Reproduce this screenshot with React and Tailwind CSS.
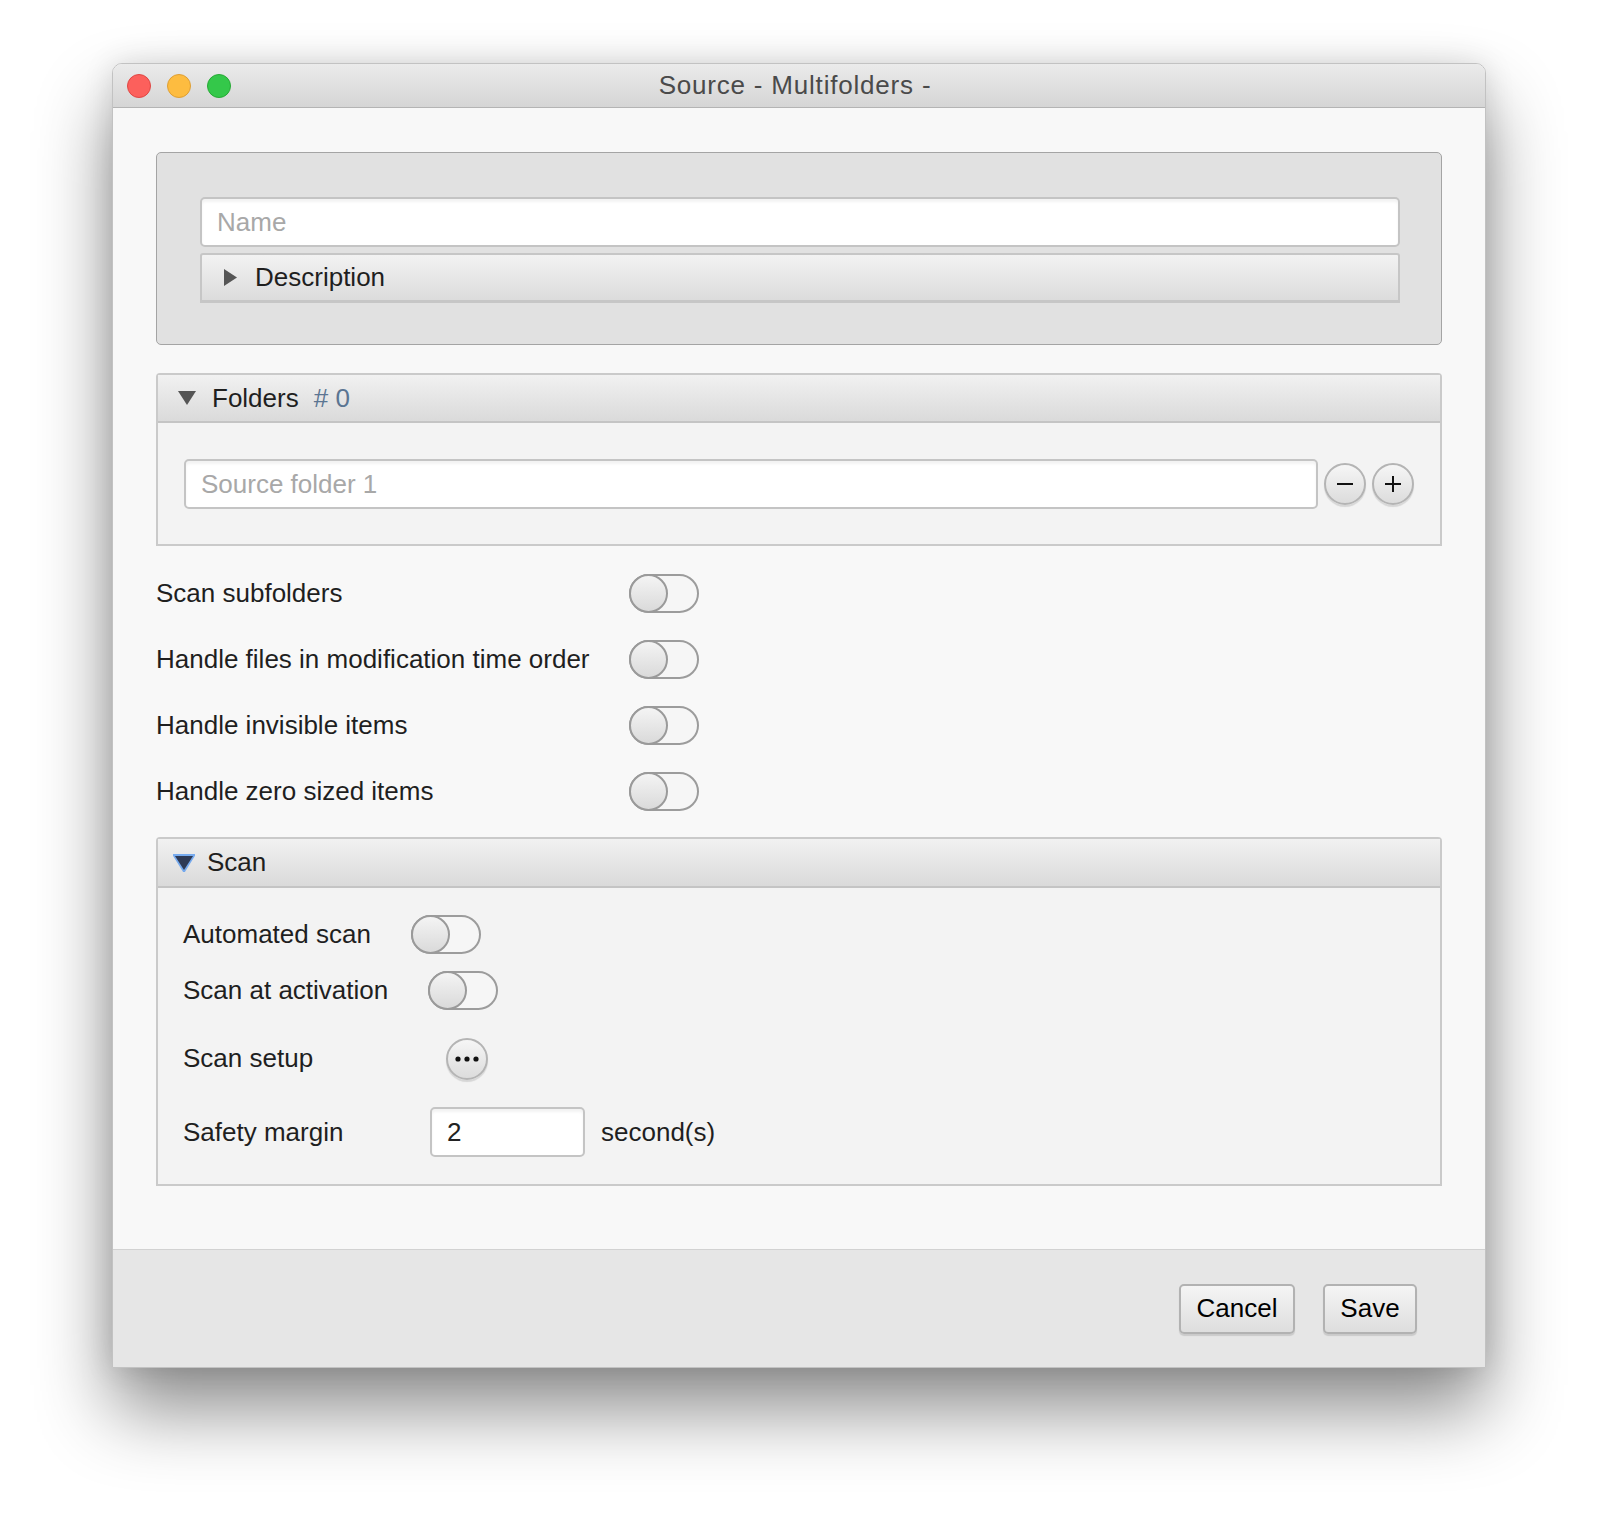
import React from 'react';

const Toggle = () => (
  <div className="relative w-[70px] h-[39px] rounded-full border-2 border-[#9c9c9c] bg-[#f6f6f6] shrink-0">
    <div className="absolute left-[-2px] top-[-2px] w-[39px] h-[39px] rounded-full border-2 border-[#9a9a9a] bg-gradient-to-b from-[#f4f4f4] to-[#dadada]"></div>
  </div>
);

const RoundButton = ({ children }) => (
  <button className="w-[42px] h-[42px] rounded-full border-2 border-[#b4b4b4] bg-gradient-to-b from-[#f6f6f6] to-[#dcdcdc] shadow-[0_2px_1px_rgba(0,0,0,0.12)] flex items-center justify-center text-black shrink-0">
    {children}
  </button>
);

const TextInput = ({ placeholder, value, className = '' }) => (
  <div className={`h-[50px] rounded-[5px] border-2 border-[#c4c4c4] bg-white shadow-[inset_0_3px_3px_rgba(0,0,0,0.05)] flex items-center px-[15px] text-[26px] ${className}`}>
    {value ? <span className="text-[#222]">{value}</span> : <span className="text-[#a8a8a8]">{placeholder}</span>}
  </div>
);

const DownTriangle = ({ focused }) => (
  <svg width="22" height="18" viewBox="0 0 22 18" className="shrink-0">
    {focused && (
      <polygon points="1,1 21,1 11,17" fill="none" stroke="#5a9bf0" strokeWidth="2.5" strokeLinejoin="round" opacity="0.8" />
    )}
    <polygon points="2,2 20,2 11,16" fill={focused ? '#2e3a55' : '#555555'} />
  </svg>
);

const toggles = [
  'Scan subfolders',
  'Handle files in modification time order',
  'Handle invisible items',
  'Handle zero sized items',
];

const App = () => {
  return (
    <div className="min-h-[1526px] bg-white pt-[63px] pl-[112px] font-['Liberation_Sans',Arial,sans-serif] text-[#1f1f1f]">
      <div className="w-[1374px] rounded-t-[10px] border border-[#c2c2c2] bg-[#f8f8f8] shadow-[0_42px_75px_rgba(0,0,0,0.45),0_0_30px_rgba(0,0,0,0.12)] flex flex-col overflow-hidden">
        {/* Title bar */}
        <div className="h-[44px] grid grid-cols-[1fr_auto_1fr] items-center bg-gradient-to-b from-[#ebebeb] to-[#d5d5d5] border-b border-[#b4b4b4]">
          <div className="flex items-center gap-[16px] pl-[14px]">
            <span className="w-[24px] h-[24px] rounded-full bg-[#fc605c] border border-[#df4744]"></span>
            <span className="w-[24px] h-[24px] rounded-full bg-[#fdbc40] border border-[#de9f34]"></span>
            <span className="w-[24px] h-[24px] rounded-full bg-[#34c84a] border border-[#27a935]"></span>
          </div>
          <div className="mr-[8px] text-[26px] tracking-[0.8px] text-[#4a4a4a]">Source - Multifolders -</div>
          <div></div>
        </div>

        {/* Content */}
        <div className="px-[43px] pt-[44px] pb-[63px] flex flex-col">
          {/* Name / description */}
          <div className="h-[193px] rounded-[5px] border border-[#a4a4a4] bg-[#e1e1e1] pl-[43px] pr-[41px] pt-[44px]">
            <TextInput placeholder="Name" />
            <div className="mt-[6px] h-[50px] border-2 border-b-[3px] border-[#c6c6c6] rounded-t-[3px] bg-gradient-to-b from-[#f2f2f2] to-[#dcdcdc] flex items-center pl-[21px] gap-[17px] text-[26px]">
              <svg width="15" height="19" viewBox="0 0 15 19"><polygon points="1,1 14,9.5 1,18" fill="#555555" /></svg>
              <span>Description</span>
            </div>
          </div>

          {/* Folders */}
          <div className="mt-[28px] rounded-t-[4px] border-2 border-[#cacaca] bg-[#f3f3f3]">
            <div className="h-[48px] bg-gradient-to-b from-[#f1f1f1] to-[#dadada] border-b-2 border-[#c4c4c4] flex items-center pl-[18px] text-[26px]">
              <DownTriangle />
              <span className="ml-[14px]">Folders</span>
              <span className="ml-[15px] text-[#5b7592]"># 0</span>
            </div>
            <div className="px-[26px] pt-[36px] pb-[35px] flex items-center gap-[6px]">
              <TextInput placeholder="Source folder 1" className="flex-1" />
              <RoundButton>
                <svg width="22" height="22" viewBox="0 0 22 22"><line x1="3" y1="11" x2="19" y2="11" stroke="#111" strokeWidth="2" /></svg>
              </RoundButton>
              <RoundButton>
                <svg width="22" height="22" viewBox="0 0 22 22"><line x1="3" y1="11" x2="19" y2="11" stroke="#111" strokeWidth="2" /><line x1="11" y1="3" x2="11" y2="19" stroke="#111" strokeWidth="2" /></svg>
              </RoundButton>
            </div>
          </div>

          {/* Toggles */}
          <div className="mt-[28px] flex flex-col gap-[27px]">
            {toggles.map((label) => (
              <div key={label} className="flex items-center h-[39px]">
                <span className="w-[473px] text-[26px]">{label}</span>
                <Toggle />
              </div>
            ))}
          </div>

          {/* Scan */}
          <div className="mt-[26px] rounded-t-[4px] border-2 border-[#cacaca] bg-[#f3f3f3]">
            <div className="h-[49px] bg-gradient-to-b from-[#f1f1f1] to-[#dadada] border-b-2 border-[#c4c4c4] flex items-center pl-[15px] text-[26px]">
              <DownTriangle focused />
              <span className="ml-[12px]">Scan</span>
            </div>
            <div className="px-[25px] pt-[27px] pb-[27px] flex flex-col">
              <div className="flex items-center gap-[40px] h-[39px] text-[26px]">
                <span>Automated scan</span>
                <Toggle />
              </div>
              <div className="mt-[17px] flex items-center gap-[40px] h-[39px] text-[26px]">
                <span>Scan at activation</span>
                <Toggle />
              </div>
              <div className="mt-[27px] flex items-center h-[43px] text-[26px]">
                <span className="w-[263px]">Scan setup</span>
                <RoundButton>
                  <svg width="26" height="8" viewBox="0 0 26 8">
                    <circle cx="4" cy="4" r="2.6" fill="#111" />
                    <circle cx="13" cy="4" r="2.6" fill="#111" />
                    <circle cx="22" cy="4" r="2.6" fill="#111" />
                  </svg>
                </RoundButton>
              </div>
              <div className="mt-[27px] flex items-center text-[26px]">
                <span className="w-[247px]">Safety margin</span>
                <TextInput value="2" className="w-[155px]" />
                <span className="ml-[16px]">second(s)</span>
              </div>
            </div>
          </div>
        </div>

        {/* Footer */}
        <div className="h-[118px] bg-[#e6e6e6] border-t border-[#d2d2d2] flex items-center justify-end gap-[28px] pr-[68px]">
          <button className="w-[116px] h-[50px] rounded-[5px] border-2 border-[#b2b2b2] bg-gradient-to-b from-[#f5f5f5] to-[#dedede] shadow-[0_2px_1px_rgba(0,0,0,0.12)] text-[26px] text-black">Cancel</button>
          <button className="w-[94px] h-[50px] rounded-[5px] border-2 border-[#b2b2b2] bg-gradient-to-b from-[#f5f5f5] to-[#dedede] shadow-[0_2px_1px_rgba(0,0,0,0.12)] text-[26px] text-black">Save</button>
        </div>
      </div>
    </div>
  );
};

export default App;
